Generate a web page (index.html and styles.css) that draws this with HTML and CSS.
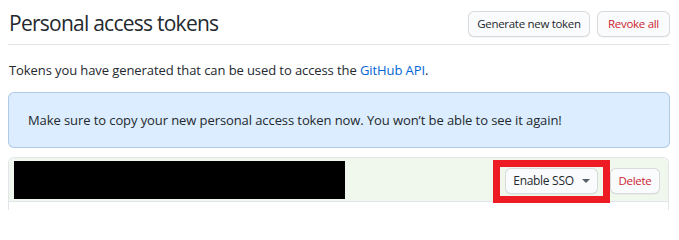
FILE: index.html
```html
<!DOCTYPE html>
<html lang="en">
<head>
<meta charset="utf-8">
<title>Personal access tokens</title>
<link rel="stylesheet" href="styles.css">
</head>
<body>
<div class="page">
  <div class="subhead">
    <h2 class="subhead-title">Personal access tokens</h2>
    <div class="subhead-actions">
      <button class="btn btn-generate">Generate new token</button>
      <button class="btn btn-danger btn-revoke">Revoke all</button>
    </div>
  </div>
  <p class="intro">Tokens you have generated that can be used to access the <a href="#" class="link">GitHub API</a>.</p>
  <div class="flash">Make sure to copy your new personal access token now. You won’t be able to see it again!</div>
  <div class="box">
    <div class="box-row new-token">
      <div class="redacted"></div>
      <div class="row-actions">
        <div class="sso-wrap">
          <button class="btn btn-sso">Enable SSO <span class="caret"></span></button>
          <span class="highlight"></span>
        </div>
        <button class="btn btn-danger btn-delete">Delete</button>
      </div>
    </div>
    <div class="box-row rest"></div>
  </div>
</div>
</body>
</html>
```

FILE: styles.css
```css
* { box-sizing: border-box; }
html, body { margin: 0; padding: 0; background: #fff; }
body {
  font-family: "Open Sans", "Noto Sans", "Liberation Sans", sans-serif;
  color: #24292e;
  font-size: 13px;
}
.page {
  width: 662px;
  margin-left: 8px;
}
.subhead {
  display: flex;
  align-items: center;
  justify-content: space-between;
  padding: 11px 0 7px;
  border-bottom: 1px solid #e1e4e8;
}
.subhead-title {
  margin: 0;
  font-weight: 400;
  font-size: 21px;
  letter-spacing: -0.75px;
  line-height: 26px;
  padding-left: 1px;
  position: relative;
  top: -1px;
}
.subhead-actions {
  display: flex;
  gap: 7px;
}
.btn {
  font-family: inherit;
  font-size: 11.5px;
  letter-spacing: -0.3px;
  line-height: 24px;
  height: 26px;
  padding: 0 11px;
  color: #24292e;
  background: #fafbfc;
  border: 1px solid rgba(27, 31, 35, 0.15);
  border-radius: 6px;
  box-shadow: 0 1px 0 rgba(27, 31, 35, 0.04);
  cursor: pointer;
  white-space: nowrap;
}
.btn-danger { color: #cb2431; }
.btn-generate { width: 122px; padding: 0; }
.btn-revoke { width: 73px; padding: 0; }
.btn-delete { width: 50px; padding: 0; }
.intro {
  margin: 15px 0 0;
  padding-left: 1px;
  line-height: 21px;
  letter-spacing: -0.09px;
}
.link { color: #0366d6; text-decoration: none; }
.flash {
  margin-top: 11px;
  padding: 16px 19px;
  line-height: 22px;
  letter-spacing: -0.09px;
  background: #dbedff;
  border: 1px solid rgba(4, 66, 137, 0.2);
  border-radius: 6px;
}
.box {
  margin-top: 9px;
  border: 1px solid #e1e4e8;
  border-bottom: 0;
  border-radius: 6px 6px 0 0;
  width: 661px;
}
.box-row {
  display: flex;
  align-items: center;
  justify-content: space-between;
}
.new-token {
  background: #f0f8ee;
  padding: 3px 8px 2px 5px;
  border-bottom: 1px solid #e1e4e8;
  border-radius: 6px 6px 0 0;
}
.redacted {
  width: 331px;
  height: 38px;
  background: #000;
}
.row-actions {
  display: flex;
  align-items: center;
  gap: 12px;
  margin-top: 1px;
}
.sso-wrap { position: relative; display: flex; }
.btn-sso {
  display: inline-flex;
  align-items: center;
  justify-content: center;
  width: 93px;
  padding: 0;
  font-size: 12px;
}
.caret {
  display: inline-block;
  margin-left: 8px;
  width: 0;
  height: 0;
  border-left: 4px solid transparent;
  border-right: 4px solid transparent;
  border-top: 4px solid #586069;
}
.highlight {
  position: absolute;
  left: -12px;
  right: -12px;
  top: -8px;
  bottom: -9px;
  border: 7px solid #ed1c24;
  pointer-events: none;
}
.rest { height: 8px; }
```
